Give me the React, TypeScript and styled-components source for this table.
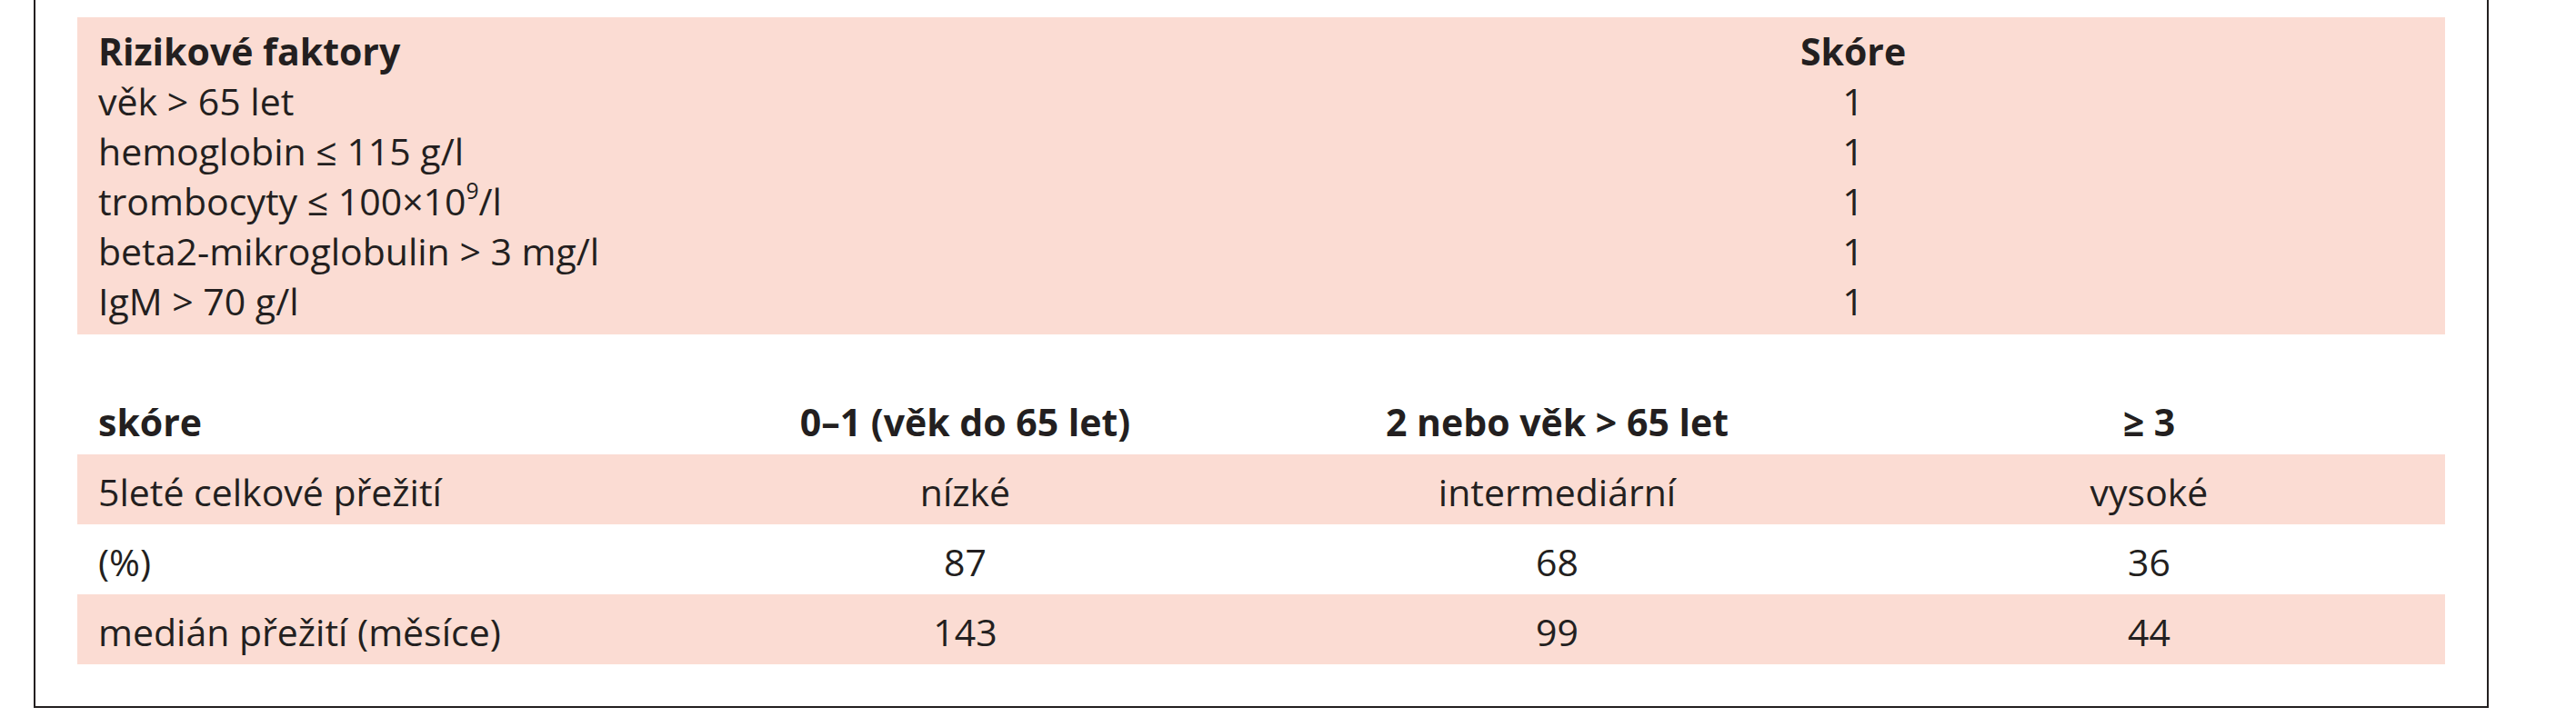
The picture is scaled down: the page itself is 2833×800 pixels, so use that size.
import React from "react";
import styled, { createGlobalStyle } from "styled-components";

const GlobalStyle = createGlobalStyle`
  html, body {
    margin: 0;
    padding: 0;
    background: #ffffff;
  }
  body {
    font-family: "Open Sans", "Noto Sans", "DejaVu Sans", sans-serif;
    color: #231f20;
  }
`;

const PINK = "#fbdcd3";

const Frame = styled.div`
  box-sizing: border-box;
  width: 2700px;
  margin-left: 37px;
  border: 2px solid #231f20;
  border-top: none;
  padding: 19px 46px 46px;
  display: flex;
  flex-direction: column;
  gap: 55px;
`;

const RiskTable = styled.div`
  background: ${PINK};
  padding: 10px 0 9px;
  display: grid;
  grid-template-columns: 1fr 1fr;
  grid-auto-rows: 55px;
`;

const RiskCell = styled.div<{ $bold?: boolean; $center?: boolean }>`
  font-size: 41px;
  line-height: 55px;
  white-space: nowrap;
  font-weight: ${(p) => (p.$bold ? 700 : 400)};
  text-align: ${(p) => (p.$center ? "center" : "left")};
  padding-left: ${(p) => (p.$center ? "0" : "23px")};
`;

const ScoreTable = styled.div`
  display: flex;
  flex-direction: column;
`;

const ScoreRow = styled.div<{ $shaded?: boolean }>`
  display: grid;
  grid-template-columns: repeat(4, 1fr);
  height: 77px;
  background: ${(p) => (p.$shaded ? PINK : "transparent")};
`;

const ScoreCell = styled.div<{ $bold?: boolean; $first?: boolean }>`
  box-sizing: border-box;
  font-size: 41px;
  line-height: 77px;
  padding-top: 3px;
  white-space: nowrap;
  font-weight: ${(p) => (p.$bold ? 700 : 400)};
  text-align: ${(p) => (p.$first ? "left" : "center")};
  padding-left: ${(p) => (p.$first ? "23px" : "0")};
`;

const Sup = styled.sup`
  font-size: 0.6em;
  line-height: 0;
  vertical-align: 0.75em;
`;

const factors: React.ReactNode[] = [
  "věk > 65 let",
  "hemoglobin ≤ 115 g/l",
  <>
    trombocyty ≤ 100×10<Sup>9</Sup>/l
  </>,
  "beta2-mikroglobulin > 3 mg/l",
  "IgM > 70 g/l",
];

const scoreRows: string[][] = [
  ["5leté celkové přežití", "nízké", "intermediární", "vysoké"],
  ["(%)", "87", "68", "36"],
  ["medián přežití (měsíce)", "143", "99", "44"],
];

export default function App() {
  return (
    <>
      <GlobalStyle />
      <Frame>
        <RiskTable>
          <RiskCell $bold>Rizikové faktory</RiskCell>
          <RiskCell $bold $center>
            Skóre
          </RiskCell>
          {factors.map((f, i) => (
            <React.Fragment key={i}>
              <RiskCell>{f}</RiskCell>
              <RiskCell $center>1</RiskCell>
            </React.Fragment>
          ))}
        </RiskTable>
        <ScoreTable>
          <ScoreRow>
            <ScoreCell $bold $first>
              skóre
            </ScoreCell>
            <ScoreCell $bold>0–1 (věk do 65 let)</ScoreCell>
            <ScoreCell $bold>2 nebo věk &gt; 65 let</ScoreCell>
            <ScoreCell $bold>≥ 3</ScoreCell>
          </ScoreRow>
          {scoreRows.map((row, i) => (
            <ScoreRow key={i} $shaded={i % 2 === 0}>
              {row.map((c, j) => (
                <ScoreCell key={j} $first={j === 0}>
                  {c}
                </ScoreCell>
              ))}
            </ScoreRow>
          ))}
        </ScoreTable>
      </Frame>
    </>
  );
}
